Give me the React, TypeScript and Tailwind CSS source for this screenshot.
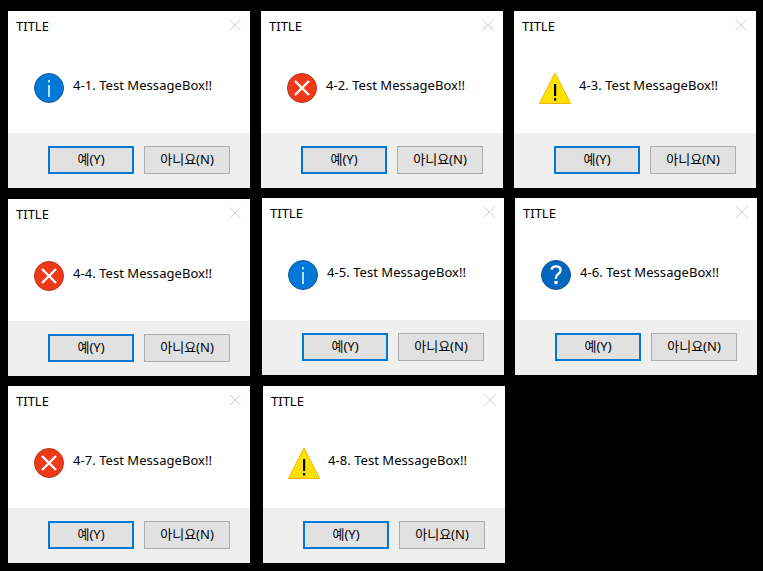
import React from "react";

type Kind = "info" | "error" | "warning" | "question";

function Icon({ kind }: { kind: Kind }) {
  if (kind === "warning") {
    return (
      <svg width="32" height="32" viewBox="0 0 32 32" className="block">
        <path d="M16 1 L31.6 31.5 L0.4 31.5 Z" fill="#ffe100" stroke="#f6b400" strokeWidth="1" strokeLinejoin="round" />
        <rect x="15" y="12" width="2.2" height="12" fill="#000" />
        <rect x="15" y="26" width="2.2" height="2.6" fill="#000" />
      </svg>
    );
  }
  if (kind === "error") {
    return (
      <svg width="30" height="30" viewBox="0 0 30 30" className="block">
        <circle cx="15" cy="15" r="14.5" fill="#f03a17" stroke="#b5351c" strokeWidth="1" />
        <path d="M8 8 L22 22 M22 8 L8 22" stroke="#fff" strokeWidth="2.4" fill="none" />
      </svg>
    );
  }
  if (kind === "question") {
    return (
      <svg width="30" height="30" viewBox="0 0 30 30" className="block">
        <circle cx="15" cy="15" r="14.5" fill="#0067c0" stroke="#17508f" strokeWidth="1" />
        <path d="M10.4 9.6 C11 7.4 13 6.4 15 6.4 C17.8 6.4 19.6 8 19.6 10.3 C19.6 12.2 18.5 13.2 17 14.3 C15.6 15.3 15 16.2 15 17.8 L15 18.8" stroke="#fff" strokeWidth="2.4" fill="none" />
        <rect x="13.4" y="21" width="3.2" height="3.2" fill="#fff" />
      </svg>
    );
  }
  return (
    <svg width="30" height="30" viewBox="0 0 30 30" className="block">
      <circle cx="15" cy="15" r="14.5" fill="#0078d7" stroke="#17589c" strokeWidth="1" />
      <rect x="14.25" y="7" width="1.5" height="2.4" fill="#fff" />
      <rect x="14.25" y="12" width="1.5" height="12" fill="#fff" />
    </svg>
  );
}

function Dialog({ x, y, label, kind }: { x: number; y: number; label: string; kind: Kind }) {
  return (
    <div
      className="absolute flex h-[177px] w-[242px] flex-col bg-white"
      style={{ left: x, top: y }}
    >
      <div className="flex h-[30px] items-center justify-between pl-2 pr-[9px]">
        <span className="text-[13px] leading-none text-black">TITLE</span>
        <svg width="12" height="12" viewBox="0 0 12 12" className="mb-[3px] block">
          <path d="M0.5 0.5 L11.5 11.5 M11.5 0.5 L0.5 11.5" stroke="#cfcfcf" strokeWidth="1" fill="none" />
        </svg>
      </div>
      <div className="flex h-[92px] items-center pb-[1px]">
        <div className={kind === "warning" ? "ml-[25px] mr-2 mt-[2px]" : "ml-[26px] mr-[9px] mt-[2px]"}>
          <Icon kind={kind} />
        </div>
        <span className="mb-[2px] text-[13px] leading-none tracking-[0.05px] whitespace-nowrap text-black">{label}</span>
      </div>
      <div className="flex flex-1 items-start justify-end gap-[10px] bg-[#efefef] pr-[20px] pt-[13px]">
        <button className="flex h-[28px] w-[86px] items-center justify-center border-2 border-[#0078d7] bg-[#e1e1e1] text-[13px] text-black">
          예(Y)
        </button>
        <button className="flex h-[28px] w-[86px] items-center justify-center border border-[#adadad] bg-[#e1e1e1] text-[13px] text-black">
          아니요(N)
        </button>
      </div>
    </div>
  );
}

const dialogs: { x: number; y: number; label: string; kind: Kind }[] = [
  { x: 8, y: 11, label: "4-1. Test MessageBox!!", kind: "info" },
  { x: 261, y: 11, label: "4-2. Test MessageBox!!", kind: "error" },
  { x: 514, y: 11, label: "4-3. Test MessageBox!!", kind: "warning" },
  { x: 8, y: 199, label: "4-4. Test MessageBox!!", kind: "error" },
  { x: 262, y: 198, label: "4-5. Test MessageBox!!", kind: "info" },
  { x: 515, y: 198, label: "4-6. Test MessageBox!!", kind: "question" },
  { x: 8, y: 386, label: "4-7. Test MessageBox!!", kind: "error" },
  { x: 263, y: 386, label: "4-8. Test MessageBox!!", kind: "warning" },
];

export default function App() {
  return (
    <div
      className="relative h-[571px] w-[763px] overflow-hidden bg-black"
      style={{ fontFamily: '"Noto Sans", "Noto Sans CJK KR", sans-serif' }}
    >
      {dialogs.map((d) => (
        <Dialog key={d.label} {...d} />
      ))}
    </div>
  );
}
